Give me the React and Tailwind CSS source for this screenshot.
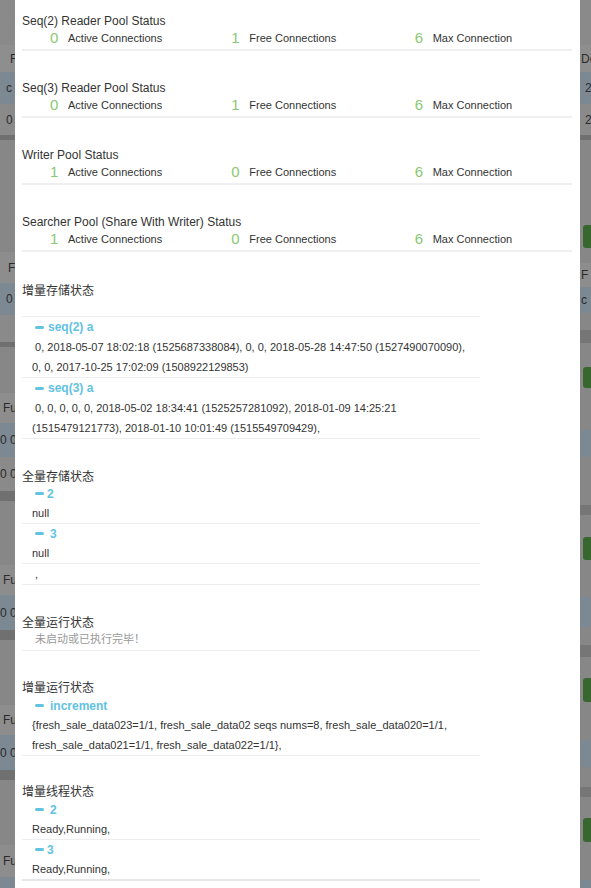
import React from "react";

const FONT = "font-['Liberation_Sans','Noto_Sans_CJK_SC',Arial,sans-serif]";

// dimmed page behind the modal
const leftBands = [
    { h: "h-[45px]", c: "bg-[#8a8a8a]" },
    { h: "h-[27px]", c: "bg-[#8e8e8e]", t: "F", p: "pl-[10px]" },
    { h: "h-[32px]", c: "bg-[#7c8892]", t: "c", p: "pl-[6px]" },
    { h: "h-[31px]", c: "bg-[#8a8a8a]", t: "0", p: "pl-[6px]" },
    { h: "h-[5px]", c: "bg-[#707070]" },
    { h: "h-[112px]", c: "bg-[#878787]" },
    { h: "h-[31px]", c: "bg-[#8d8d8d]", t: "F", p: "pl-[8px]" },
    { h: "h-[32px]", c: "bg-[#7c8892]", t: "0", p: "pl-[6px]" },
    { h: "h-[27px]", c: "bg-[#8a8a8a]" },
    { h: "h-[5px]", c: "bg-[#707070]" },
    { h: "h-[46px]", c: "bg-[#878787]" },
    { h: "h-[30px]", c: "bg-[#8d8d8d]", t: "Fu", p: "pl-[3px]" },
    { h: "h-[34px]", c: "bg-[#7c8892]", t: "0 0", p: "pl-[0px]" },
    { h: "h-[34px]", c: "bg-[#8a8a8a]", t: "0 0", p: "pl-[0px]" },
    { h: "h-[10px]", c: "bg-[#707070]" },
    { h: "h-[64px]", c: "bg-[#878787]" },
    { h: "h-[30px]", c: "bg-[#8d8d8d]", t: "Fu", p: "pl-[3px]" },
    { h: "h-[35px]", c: "bg-[#7c8892]", t: "0 0", p: "pl-[0px]" },
    { h: "h-[10px]", c: "bg-[#707070]" },
    { h: "h-[65px]", c: "bg-[#878787]" },
    { h: "h-[30px]", c: "bg-[#8d8d8d]", t: "Fu", p: "pl-[3px]" },
    { h: "h-[35px]", c: "bg-[#7c8892]", t: "0 0", p: "pl-[0px]" },
    { h: "h-[10px]", c: "bg-[#707070]" },
    { h: "h-[65px]", c: "bg-[#878787]" },
    { h: "h-[32px]", c: "bg-[#8d8d8d]", t: "Fu", p: "pl-[3px]" },
    { h: "h-[11px]", c: "bg-[#7c8892]" },
];

const rightBands = [
    { h: "h-[45px]", c: "bg-[#8a8a8a]" },
    { h: "h-[27px]", c: "bg-[#8e8e8e]", t: "De" },
    { h: "h-[32px]", c: "bg-[#7c8892]", t: "2", p: "pl-[5px]" },
    { h: "h-[31px]", c: "bg-[#8a8a8a]", t: "2", p: "pl-[5px]" },
    { h: "h-[5px]", c: "bg-[#707070]" },
    { h: "h-[85px]", c: "bg-[#878787]" },
    { h: "h-[23px]", c: "bg-[#878787]", g: true },
    { h: "h-[15px]", c: "bg-[#878787]" },
    { h: "h-[24px]", c: "bg-[#8d8d8d]", t: "F" },
    { h: "h-[26px]", c: "bg-[#7c8892]", t: "c" },
    { h: "h-[17px]", c: "bg-[#878787]" },
    { h: "h-[13px]", c: "bg-[#767676]" },
    { h: "h-[24px]", c: "bg-[#878787]" },
    { h: "h-[21px]", c: "bg-[#878787]", g: true },
    { h: "h-[42px]", c: "bg-[#878787]" },
    { h: "h-[27px]", c: "bg-[#7c8892]" },
    { h: "h-[48px]", c: "bg-[#878787]" },
    { h: "h-[10px]", c: "bg-[#767676]" },
    { h: "h-[22px]", c: "bg-[#878787]" },
    { h: "h-[23px]", c: "bg-[#878787]", g: true },
    { h: "h-[37px]", c: "bg-[#878787]" },
    { h: "h-[30px]", c: "bg-[#7c8892]" },
    { h: "h-[18px]", c: "bg-[#878787]" },
    { h: "h-[12px]", c: "bg-[#767676]" },
    { h: "h-[21px]", c: "bg-[#878787]" },
    { h: "h-[24px]", c: "bg-[#878787]", g: true },
    { h: "h-[38px]", c: "bg-[#878787]" },
    { h: "h-[27px]", c: "bg-[#7c8892]" },
    { h: "h-[20px]", c: "bg-[#878787]" },
    { h: "h-[10px]", c: "bg-[#767676]" },
    { h: "h-[21px]", c: "bg-[#878787]" },
    { h: "h-[24px]", c: "bg-[#878787]", g: true },
    { h: "h-[38px]", c: "bg-[#878787]" },
    { h: "h-[8px]", c: "bg-[#7c8892]" },
];

const Strip = ({ bands, width }) => (
    <div className={`${width} shrink-0 flex flex-col overflow-hidden`}>
        {bands.map((b, i) => (
            <div
                key={i}
                className={`${b.h} ${b.c} ${b.p ?? "pl-[1px]"} ${b.g ? "pl-[3px]" : ""} flex items-center text-[12px] text-[#2b2b2b] whitespace-nowrap`}
            >
                {b.g ? <div className="h-full w-full rounded-l-[3px] bg-[#37672f]" /> : b.t}
            </div>
        ))}
    </div>
);

const Stat = ({ n, label, pad = "pl-[28px]" }) => (
    <div className={`flex items-center ${pad}`}>
        <span className="w-[8px] text-[15px] leading-[18px] text-[#8ac873]">{n}</span>
        <span className="ml-[10px] text-[11px] text-[#333]">{label}</span>
    </div>
);

const PoolStatus = ({ title, active, free, max }) => (
    <div className="mb-[29px] pb-[2px] border-b-2 border-[#efefef]">
        <div className="h-[16px] leading-[16px] text-[12px] text-[#333]">{title}</div>
        <div className="grid grid-cols-3 h-[18px]">
            <Stat n={active} label="Active Connections" />
            <Stat n={free} label="Free Connections" pad="pl-[26px]" />
            <Stat n={max} label="Max Connection" pad="pl-[26px]" />
        </div>
    </div>
);

const Title = ({ children, className = "h-[16px] leading-[16px]" }) => (
    <div className={`text-[12px] text-[#333] ${className}`}>{children}</div>
);

const Item = ({ name, head = "h-[19px]", gap = "mr-[4px]", last, children }) => (
    <div className={`pl-[10px] ${last ? "border-b-2 border-[#e6e6e6]" : "border-b border-[#eeeeee]"}`}>
        {name !== undefined && (
            <div className={`${head} flex items-center pl-[3px] text-[12px] font-bold text-[#62c2e2]`}>
                <span className={`w-[9px] h-[3px] rounded-full bg-[#62c2e2] ${gap}`} />
                {name}
            </div>
        )}
        <div className="text-[11px] leading-[20px] text-[#333] whitespace-nowrap">{children}</div>
    </div>
);

export default function App() {
    return (
        <div className={`${FONT} flex w-[591px] h-[888px] overflow-hidden`}>
            <Strip bands={leftBands} width="w-[15px]" />

            {/* Modal */}
            <div className="flex-1 bg-white pl-[7px] pr-[8px] pt-[13px] overflow-hidden">

                <PoolStatus title="Seq(2) Reader Pool Status" active="0" free="1" max="6" />
                <PoolStatus title="Seq(3) Reader Pool Status" active="0" free="1" max="6" />
                <PoolStatus title="Writer Pool Status" active="1" free="0" max="6" />
                <PoolStatus title="Searcher Pool (Share With Writer) Status" active="1" free="0" max="6" />

                {/* 增量存储状态 */}
                <Title className="mt-[31px] h-[16px] leading-[16px]">增量存储状态</Title>
                <div className="w-[458px] mt-[17px] border-t border-[#eeeeee]">
                    <Item name="seq(2) a" head="h-[20px]">
                        {"\u00a00, 2018-05-07 18:02:18 (1525687338084), 0, 0, 2018-05-28 14:47:50 (1527490070090),"}
                        <br />
                        0, 0, 2017-10-25 17:02:09 (1508922129853)
                    </Item>
                    <Item name="seq(3) a" head="h-[20px]">
                        {"\u00a00, 0, 0, 0, 0, 2018-05-02 18:34:41 (1525257281092), 2018-01-09 14:25:21"}
                        <br />
                        (1515479121773), 2018-01-10 10:01:49 (1515549709429),
                    </Item>
                </div>

                {/* 全量存储状态 */}
                <Title className="mt-[31px] h-[14px] leading-[14px]">全量存储状态</Title>
                <div className="w-[458px]">
                    <Item name="2" gap="mr-[3px]">null</Item>
                    <Item name="3" gap="mr-[6px]">null</Item>
                    <Item>{"\u00a0,"}</Item>
                </div>

                {/* 全量运行状态 */}
                <Title className="mt-[30px] h-[16px] leading-[16px]">全量运行状态</Title>
                <div className="w-[458px] pl-[13px] pb-[3px] border-b border-[#eeeeee] text-[11px] leading-[16px] text-[#999]">
                    未启动或已执行完毕！
                </div>

                {/* 增量运行状态 */}
                <Title className="mt-[29px] h-[16px] leading-[16px]">增量运行状态</Title>
                <div className="w-[458px]">
                    <Item name="increment" gap="mr-[6px]">
                        {"{fresh_sale_data023=1/1, fresh_sale_data02 seqs nums=8, fresh_sale_data020=1/1,"}
                        <br />
                        {"fresh_sale_data021=1/1, fresh_sale_data022=1/1},"}
                    </Item>
                </div>

                {/* 增量线程状态 */}
                <Title className="mt-[28px] h-[16px] leading-[16px]">增量线程状态</Title>
                <div className="w-[458px]">
                    <Item name="2" gap="mr-[6px]">Ready,Running,</Item>
                    <Item name="3" gap="mr-[3px]" last>Ready,Running,</Item>
                </div>
            </div>

            <Strip bands={rightBands} width="w-[11px]" />
        </div>
    );
}
